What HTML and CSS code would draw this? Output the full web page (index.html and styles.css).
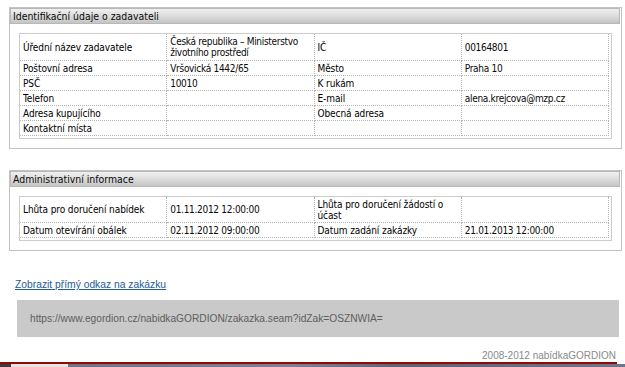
FILE: index.html
```html
<!DOCTYPE html>
<html lang="cs">
<head>
<meta charset="utf-8">
<title>Zakázka</title>
<link rel="stylesheet" href="styles.css">
</head>
<body>
<div class="page">
  <section class="box">
    <div class="box-head">Identifikační údaje o zadavateli</div>
    <div class="grid-wrap">
      <table class="grid">
        <tr class="r2">
          <th>Úřední název zadavatele</th>
          <td>Česká republika – Ministerstvo životního prostředí</td>
          <th>IČ</th>
          <td>00164801</td>
        </tr>
        <tr>
          <th>Poštovní adresa</th>
          <td>Vršovická 1442/65</td>
          <th>Město</th>
          <td>Praha 10</td>
        </tr>
        <tr>
          <th>PSČ</th>
          <td>10010</td>
          <th>K rukám</th>
          <td></td>
        </tr>
        <tr>
          <th>Telefon</th>
          <td></td>
          <th>E-mail</th>
          <td>alena.krejcova@mzp.cz</td>
        </tr>
        <tr>
          <th>Adresa kupujícího</th>
          <td></td>
          <th>Obecná adresa</th>
          <td></td>
        </tr>
        <tr>
          <th>Kontaktní místa</th>
          <td></td>
          <td></td>
          <td></td>
        </tr>
      </table>
    </div>
  </section>

  <section class="box box-admin">
    <div class="box-head">Administrativní informace</div>
    <div class="grid-wrap">
      <table class="grid">
        <tr class="r2b">
          <th>Lhůta pro doručení nabídek</th>
          <td>01.11.2012 12:00:00</td>
          <th>Lhůta pro doručení žádostí o účast</th>
          <td></td>
        </tr>
        <tr>
          <th>Datum otevírání obálek</th>
          <td>02.11.2012 09:00:00</td>
          <th>Datum zadání zakázky</th>
          <td>21.01.2013 12:00:00</td>
        </tr>
      </table>
    </div>
  </section>

  <a class="direct-link" href="#">Zobrazit přímý odkaz na zakázku</a>
  <div class="url-box">https://www.egordion.cz/nabidkaGORDION/zakazka.seam?idZak=OSZNWIA=</div>
  <div class="footer">2008-2012 nabídkaGORDION</div>
</div>
<div class="bottom-bar">
  <div class="red-line"></div>
  <div class="taskbar">
    <span class="tb-a"></span><span class="tb-b"></span><span class="tb-c"></span>
  </div>
</div>
</body>
</html>
```

FILE: styles.css
```css
html, body {
  margin: 0;
  padding: 0;
  background: #fff;
}
body {
  font-family: "Liberation Sans", Arial, sans-serif;
  color: #000;
  width: 625px;
  height: 367px;
  overflow: hidden;
  position: relative;
}
.page {
  padding: 7px 3px 0 9px;
}
.box {
  border: 1px solid #c6c2be;
  padding: 0 1px 9px 0;
}
.box-admin {
  margin-top: 21px;
}
.box-head {
  height: 14px;
  border: 1px solid #b8b8b8;
  background: linear-gradient(#f0f0f0, #dadada 55%, #c4c4c4);
  font-family: "DejaVu Sans Condensed", "Liberation Sans", sans-serif;
  font-size: 10.4px;
  line-height: 14px;
  padding-left: 2px;
  color: #0a0a0a;
}
.grid-wrap {
  margin: 9px 8px 0 9px;
  border: 1px solid #cccccc;
  padding: 0 2px 2px 0;
}
.grid {
  width: 100%;
  border-collapse: separate;
  border-spacing: 0;
  table-layout: fixed;
}
.grid th, .grid td {
  border-right: 1px dotted #b4b4b4;
  border-bottom: 1px dotted #b4b4b4;
  vertical-align: middle;
  text-align: left;
  height: 14px;
  padding: 0 3px;
  line-height: 11px;
}
.grid th {
  font-family: "DejaVu Sans Condensed", "Liberation Sans", sans-serif;
  font-weight: normal;
  font-size: 10px;
  letter-spacing: -0.1px;
  color: #000;
}
.grid td {
  font-family: "DejaVu Sans Condensed", "Liberation Sans", sans-serif;
  font-size: 10px;
  letter-spacing: -0.3px;
  color: #0a0a0a;
}
.grid tr.r2 th, .grid tr.r2 td {
  height: 26px;
}
.grid tr.r2b th, .grid tr.r2b td {
  height: 25px;
}
.direct-link {
  display: block;
  margin: 27px 0 0 6px;
  font-size: 10.3px;
  line-height: 14px;
  color: #1d5c96;
  text-decoration: underline;
  width: max-content;
}
.url-box {
  margin: 8px 3px 0 8px;
  height: 37px;
  background: #c9c9c9;
  color: #5e5e5e;
  font-size: 10.2px;
  line-height: 37px;
  padding-left: 13px;
}
.footer {
  margin-top: 12px;
  text-align: right;
  padding-right: 6px;
  font-size: 10px;
  line-height: 13px;
  color: #8a8a8a;
}
.bottom-bar {
  position: absolute;
  left: 0;
  top: 362px;
  width: 625px;
}
.red-line {
  width: 617px;
  height: 2px;
  background: #8e0a0a;
}
.taskbar {
  display: flex;
  height: 3px;
  background: #6e7688;
}
.tb-a {
  width: 11px;
  background: #3c3c3c;
}
.tb-b {
  width: 57px;
  background: #e4e4e4;
}
.tb-c {
  flex: 1;
  background: linear-gradient(90deg, #6c7486, #7a8294 40%, #5c6474 60%, #6e7688);
}
```
